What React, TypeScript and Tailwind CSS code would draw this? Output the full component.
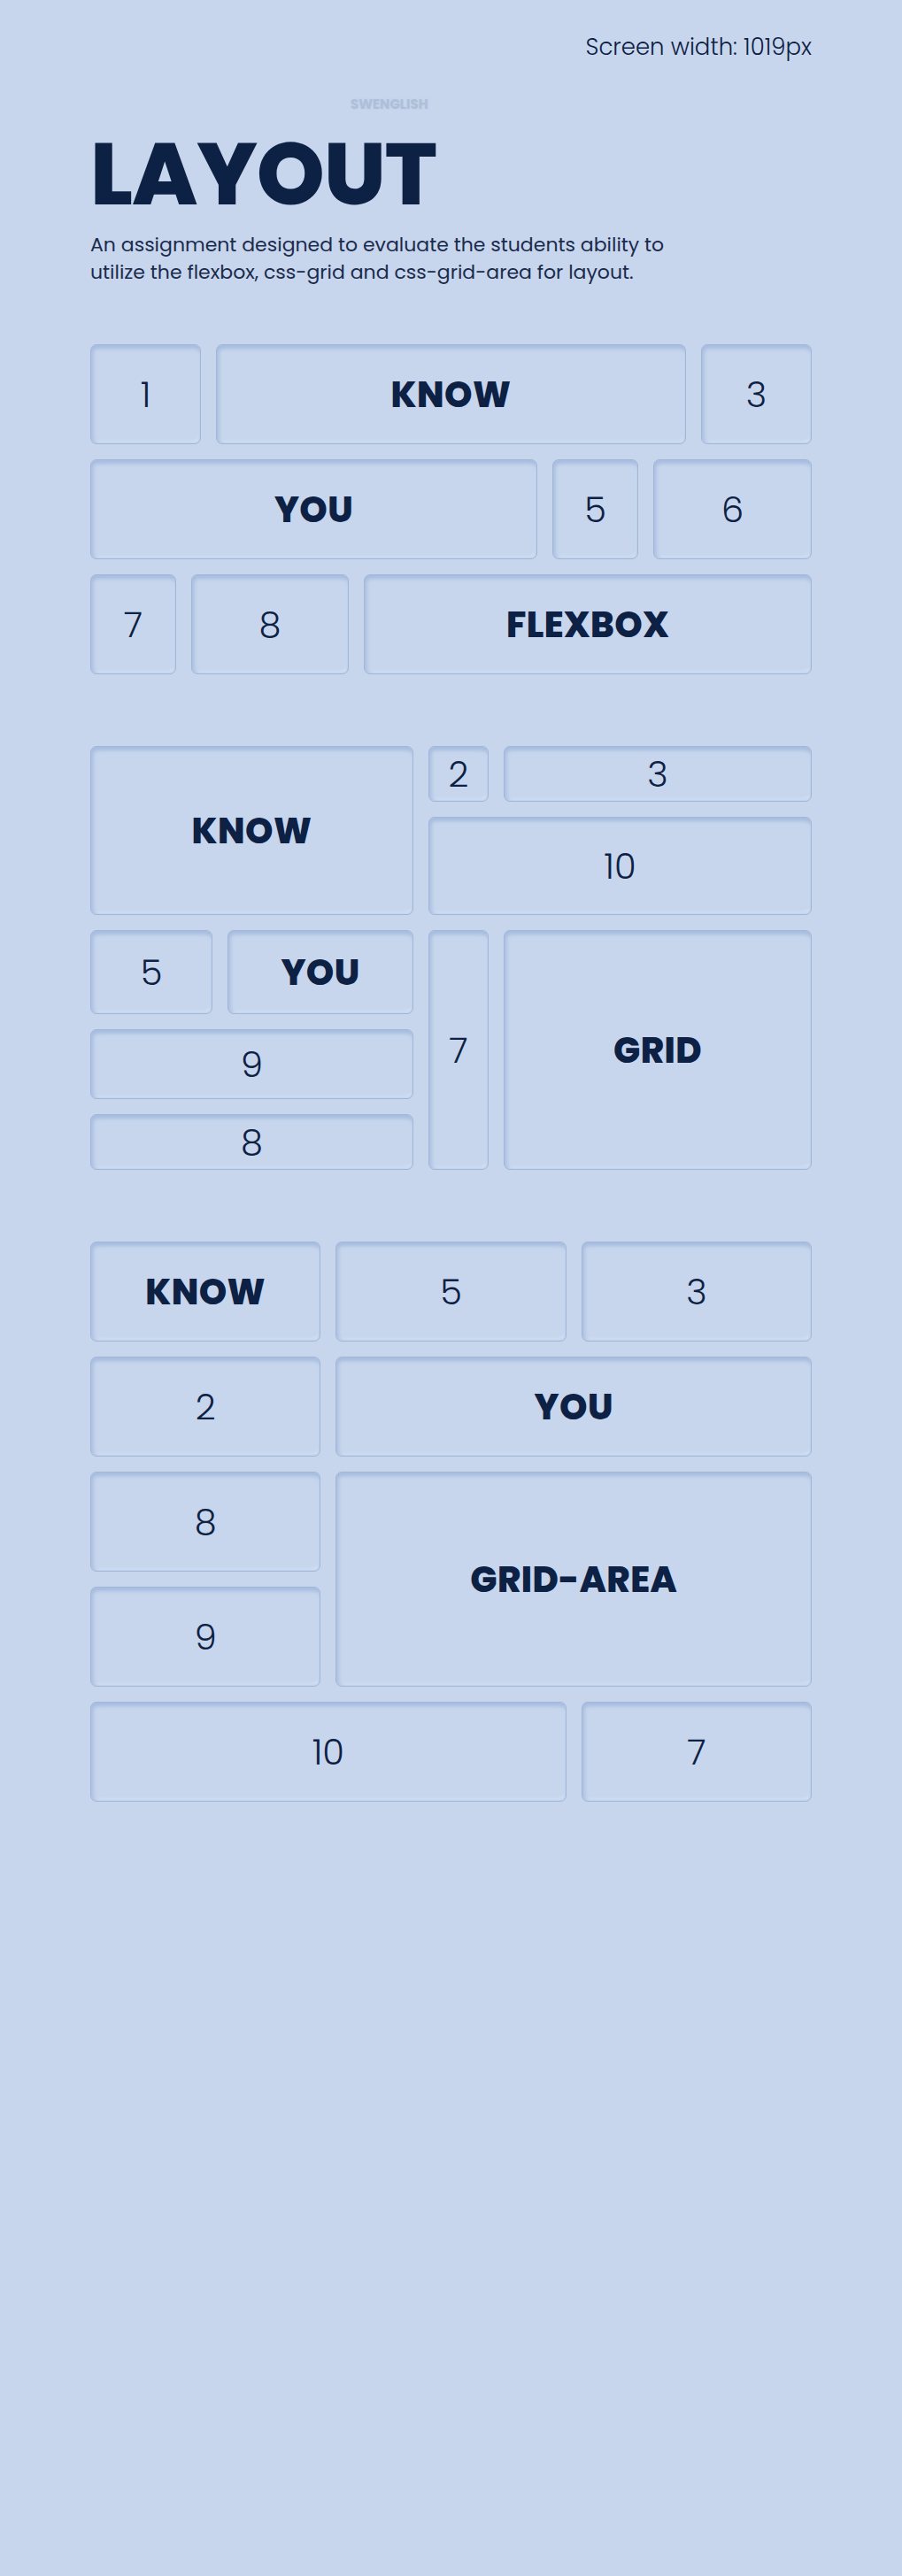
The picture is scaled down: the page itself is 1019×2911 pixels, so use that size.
const box =
  "flex items-center justify-center rounded-[7px] border border-[#a3b6d4] bg-[#c7d6ec] shadow-[inset_0_4px_4px_#a6bce0,inset_3px_0_4px_#b2c5e4,inset_-2px_-3px_3px_#d4e2f7] text-[#0d2145]";
const num = "text-[40px] font-light";
const word = "text-[40px] font-extrabold tracking-[0.01em]";

function Cell({
  label,
  bold,
  className = "",
}: {
  label: string;
  bold?: boolean;
  className?: string;
}) {
  return (
    <div className={`${box} ${className}`}>
      <span className={bold ? word : num}>{label}</span>
    </div>
  );
}

function FlexSection() {
  return (
    <div className="flex flex-col gap-[17px]">
      <div className="flex h-[113px] gap-[17px]">
        <Cell label="1" className="w-[125px]" />
        <Cell label="KNOW" bold className="flex-1" />
        <Cell label="3" className="w-[125px]" />
      </div>
      <div className="flex h-[113px] gap-[17px]">
        <Cell label="YOU" bold className="flex-1" />
        <Cell label="5" className="w-[97px]" />
        <Cell label="6" className="w-[179px]" />
      </div>
      <div className="flex h-[113px] gap-[17px]">
        <Cell label="7" className="w-[97px]" />
        <Cell label="8" className="w-[178px]" />
        <Cell label="FLEXBOX" bold className="flex-1" />
      </div>
    </div>
  );
}

function GridSection() {
  return (
    <div className="grid grid-cols-[138px_210px_68px_1fr] grid-rows-[63px_111px_95px_79px_63px] gap-[17px]">
      <Cell label="KNOW" bold className="col-start-1 col-span-2 row-start-1 row-span-2" />
      <Cell label="2" className="col-start-3 row-start-1" />
      <Cell label="3" className="col-start-4 row-start-1" />
      <Cell label="10" className="col-start-3 col-span-2 row-start-2" />
      <Cell label="5" className="col-start-1 row-start-3" />
      <Cell label="YOU" bold className="col-start-2 row-start-3" />
      <Cell label="9" className="col-start-1 col-span-2 row-start-4" />
      <Cell label="8" className="col-start-1 col-span-2 row-start-5" />
      <Cell label="7" className="col-start-3 row-start-3 row-span-3" />
      <Cell label="GRID" bold className="col-start-4 row-start-3 row-span-3" />
    </div>
  );
}

function AreaSection() {
  return (
    <div className="grid grid-cols-3 auto-rows-[113px] gap-[17px]">
      <Cell label="KNOW" bold />
      <Cell label="5" />
      <Cell label="3" />
      <Cell label="2" />
      <Cell label="YOU" bold className="col-span-2" />
      <Cell label="8" />
      <Cell label="GRID-AREA" bold className="col-span-2 row-span-2" />
      <Cell label="9" />
      <Cell label="10" className="col-span-2" />
      <Cell label="7" />
    </div>
  );
}

export default function App() {
  return (
    <div className="min-h-[2911px] bg-[#c7d6ec] px-[102px] pt-[35px] pb-20 font-['Poppins','Inter',sans-serif] text-[#0d2145]">
      <div className="flex justify-end">
        <p className="text-[26px] font-light leading-9">Screen width: 1019px</p>
      </div>

      <div className="mt-[37px] ml-[294px] text-[15px] font-bold leading-5 text-[#aebfd9] [text-shadow:0_0_2px_#b9c9e0]">
        SWENGLISH
      </div>

      <h1 className="mt-[14px] text-[98px] font-extrabold leading-[110px] tracking-[-0.01em]">
        LAYOUT
      </h1>

      <p className="mt-[9px] max-w-[700px] text-[22px] font-normal leading-[31px] text-[#1a2b4d]">
        An assignment designed to evaluate the students ability to utilize the
        flexbox, css-grid and css-grid-area for layout.
      </p>

      <div className="mt-[66px] flex flex-col gap-[81px]">
        <FlexSection />
        <GridSection />
        <AreaSection />
      </div>
    </div>
  );
}
